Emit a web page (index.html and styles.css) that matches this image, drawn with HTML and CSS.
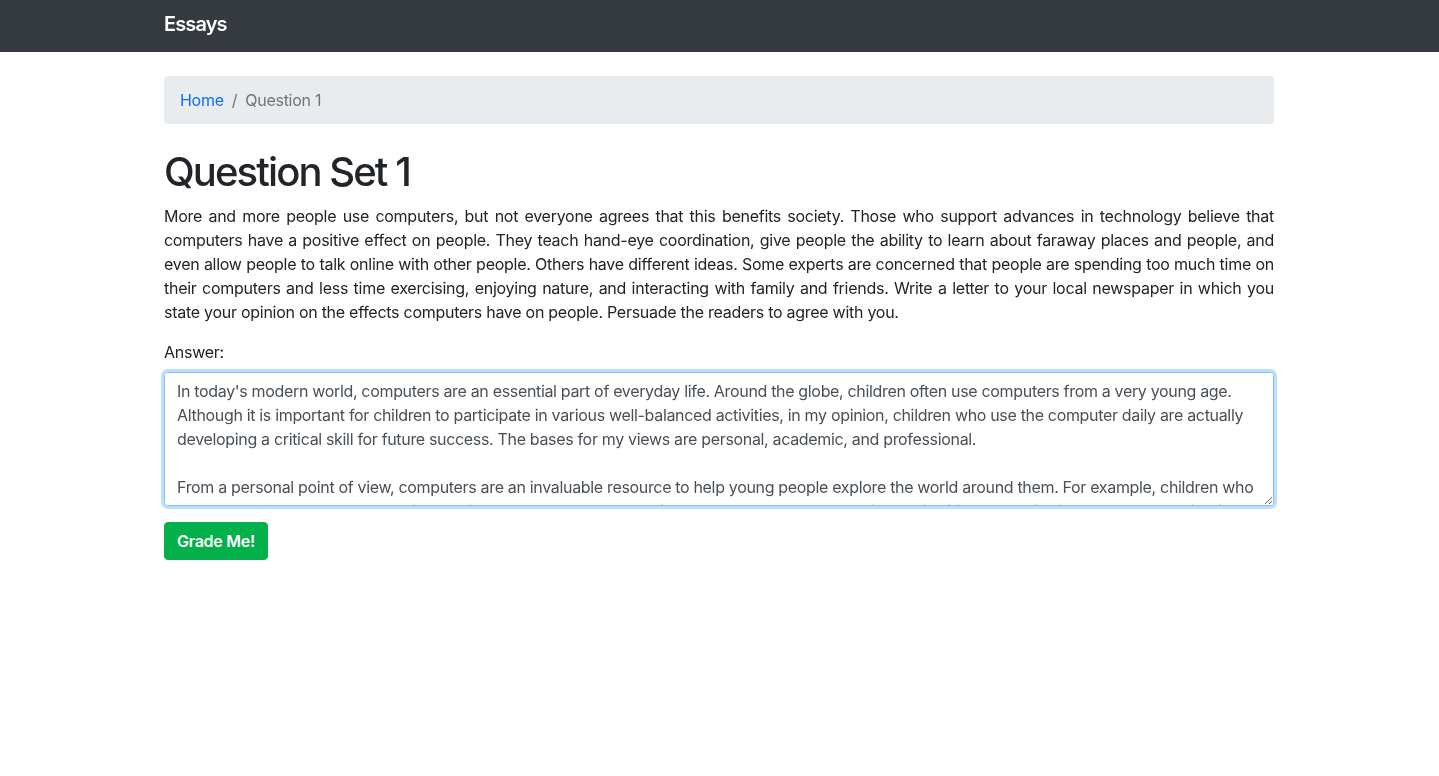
FILE: index.html
```html
<!DOCTYPE html>
<html lang="en">
<head>
<meta charset="utf-8">
<title>Essays</title>
<link rel="stylesheet" href="styles.css">
</head>
<body>
<nav class="navbar">
  <div class="container">
    <a class="brand" href="#">Essays</a>
  </div>
</nav>
<main class="container main">
  <ol class="breadcrumb">
    <li><a href="#">Home</a></li>
    <li class="sep">/</li>
    <li class="active">Question 1</li>
  </ol>
  <h1 class="title">Question Set 1</h1>
  <p class="prompt">More and more people use computers, but not everyone agrees that this benefits society. Those who support advances in technology believe that computers have a positive effect on people. They teach hand-eye coordination, give people the ability to learn about faraway places and people, and even allow people to talk online with other people. Others have different ideas. Some experts are concerned that people are spending too much time on their computers and less time exercising, enjoying nature, and interacting with family and friends. Write a letter to your local newspaper in which you state your opinion on the effects computers have on people. Persuade the readers to agree with you.</p>
  <form class="form">
    <div class="form-group">
      <label class="label" for="answer">Answer:</label>
      <textarea id="answer" class="textarea" rows="5">In today's modern world, computers are an essential part of everyday life. Around the globe, children often use computers from a very young age. Although it is important for children to participate in various well-balanced activities, in my opinion, children who use the computer daily are actually developing a critical skill for future success. The bases for my views are personal, academic, and professional.

From a personal point of view, computers are an invaluable resource to help young people explore the world around them. For example, children who use computers can research topics that interest them, learn about faraway places, and communicate with friends and family members who live far away. In this way, computers open up a world of possibilities that would otherwise remain closed to many young people.</textarea>
    </div>
    <button type="button" class="btn">Grade Me!</button>
  </form>
</main>
</body>
</html>
```

FILE: styles.css
```css
* { box-sizing: border-box; }
html, body { margin: 0; padding: 0; }
body {
  font-family: Inter, "Noto Sans", "Liberation Sans", sans-serif;
  font-size: 16px;
  line-height: 24px;
  letter-spacing: -0.27px;
  color: #212529;
  background: #fff;
}
.container {
  max-width: 1140px;
  margin: 0 auto;
  padding: 0 15.5px 0 14.5px;
}
.navbar {
  background: #343a40;
  height: 52px;
}
.navbar .container {
  height: 52px;
  display: flex;
  align-items: center;
}
.brand {
  color: #fff;
  font-size: 20px;
  font-weight: 600;
  letter-spacing: -0.9px;
  text-decoration: none;
  line-height: 30px;
  margin-top: -4px;
}
.main { padding-top: 24px; }
.breadcrumb {
  list-style: none;
  margin: 0 0 24px;
  padding: 12px 16px;
  background: #e9ecef;
  border-radius: 4px;
  display: flex;
  align-items: center;
  gap: 8px;
}
.breadcrumb a { color: #0d6efd; text-decoration: none; }
.breadcrumb .sep, .breadcrumb .active { color: #6c757d; }
.title {
  margin: 0 0 8px;
  font-size: 40px;
  line-height: 48px;
  font-weight: 500;
  letter-spacing: -1.9px;
}
.prompt {
  margin: 0 0 16px;
  text-align: justify;
}
.form-group { margin-bottom: 16px; }
.label {
  display: block;
  margin-bottom: 8px;
}
.textarea {
  display: block;
  width: 100%;
  height: 134px;
  padding: 6px 12px;
  font-family: inherit;
  font-size: 16px;
  line-height: 24px;
  letter-spacing: -0.33px;
  color: #495057;
  border: 1px solid #80bdff;
  border-radius: 4px;
  box-shadow: 0 0 0 3px rgba(0, 123, 255, 0.25);
  outline: none;
  resize: vertical;
}
.btn {
  font-family: inherit;
  font-size: 16px;
  font-weight: 600;
  line-height: 24px;
  letter-spacing: -0.27px;
  color: #fff;
  background: #03b04a;
  border: 1px solid #03b04a;
  border-radius: 4px;
  padding: 6px 12px;
  height: 38px;
}
```
